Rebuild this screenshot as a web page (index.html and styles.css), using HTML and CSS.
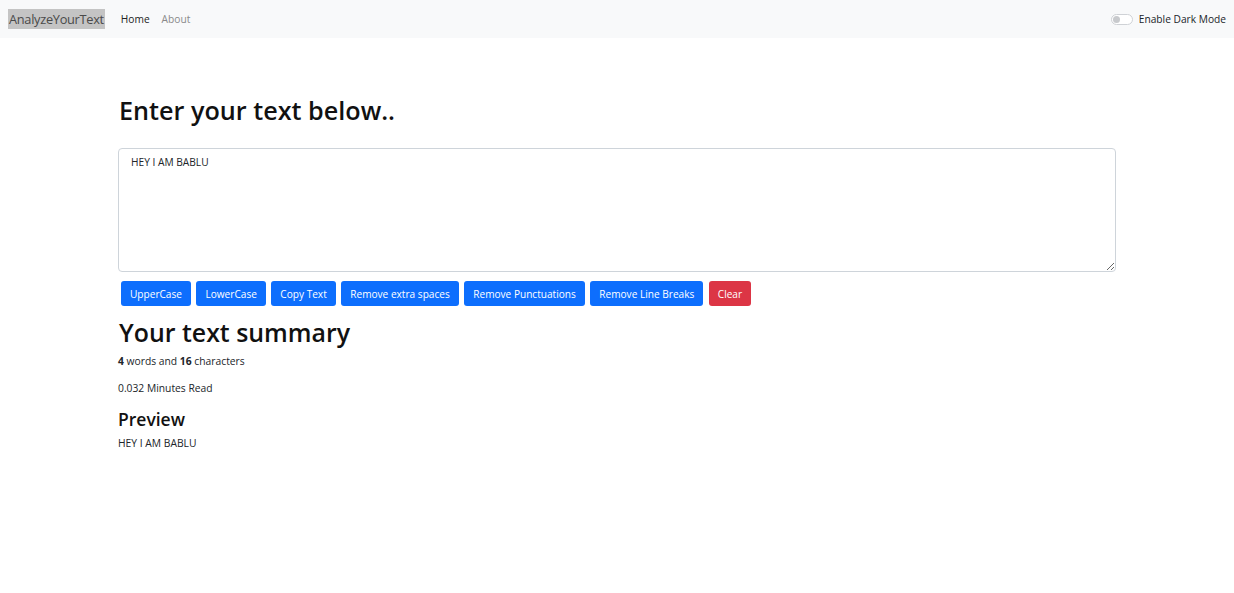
FILE: index.html
```html
<!DOCTYPE html>
<html lang="en">
<head>
<meta charset="utf-8">
<title>AnalyzeYourText</title>
<link rel="stylesheet" href="styles.css">
</head>
<body>
<nav class="navbar">
  <div class="nav-left">
    <a class="brand" href="#">AnalyzeYourText</a>
    <a class="nav-link active" href="#">Home</a>
    <a class="nav-link" href="#">About</a>
  </div>
  <label class="switch">
    <span class="toggle"><span class="knob"></span></span>
    <span class="switch-label">Enable Dark Mode</span>
  </label>
</nav>
<main class="container">
  <h1 class="title">Enter your text below..</h1>
  <textarea class="textbox">HEY I AM BABLU</textarea>
  <div class="actions">
    <button class="btn btn-primary">UpperCase</button>
    <button class="btn btn-primary">LowerCase</button>
    <button class="btn btn-primary">Copy Text</button>
    <button class="btn btn-primary">Remove extra spaces</button>
    <button class="btn btn-primary">Remove Punctuations</button>
    <button class="btn btn-primary">Remove Line Breaks</button>
    <button class="btn btn-danger">Clear</button>
  </div>
  <h1 class="summary-title">Your text summary</h1>
  <p class="line"><b>4</b> words and <b>16</b> characters</p>
  <p class="line last">0.032 Minutes Read</p>
  <h2 class="preview-title">Preview</h2>
  <p class="preview">HEY I AM BABLU</p>
</main>
</body>
</html>
```
FILE: styles.css
```css
* { box-sizing: border-box; }
body {
  margin: 0;
  font-family: "Open Sans", "Noto Sans", sans-serif;
  font-size: 10.3px;
  color: #212529;
  background: #fff;
}
.navbar {
  height: 38px;
  background: #f8f9fa;
  display: flex;
  align-items: center;
  justify-content: space-between;
  padding: 0 8px;
}
.nav-left {
  display: flex;
  align-items: center;
}
.brand {
  background: #c4c4c4;
  color: #4a4a4a;
  font-size: 12.8px;
  text-decoration: none;
  line-height: 20px;
  padding: 0 1px;
  margin-right: 16px;
  letter-spacing: -0.3px;
}
.nav-link {
  text-decoration: none;
  color: #8a8a8a;
  font-size: 10.2px;
  margin-right: 12px;
}
.nav-link.active { color: #222; }
.switch {
  display: flex;
  align-items: center;
  gap: 6px;
  font-size: 10.2px;
  color: #212529;
}
.toggle {
  width: 22px;
  height: 11px;
  border: 1px solid #cfd2d6;
  border-radius: 6px;
  background: #fff;
  display: flex;
  align-items: center;
  padding-left: 1px;
}
.knob {
  width: 7px;
  height: 7px;
  border-radius: 50%;
  background: #c8cacd;
}
.container {
  width: 998px;
  margin: 0 auto;
  padding-top: 55px;
}
.title {
  font-size: 25.2px;
  font-weight: 600;
  margin: 0 0 21px 1px;
  line-height: 34px;
  color: #111;
}
.textbox {
  display: block;
  width: 998px;
  height: 124px;
  border: 1px solid #ced4da;
  border-radius: 4px;
  padding: 6px 12px;
  font-family: inherit;
  font-size: 10.2px;
  color: #212529;
  resize: vertical;
}
.actions {
  display: flex;
  gap: 5.5px;
  margin: 9px 0 0 3px;
}
.btn {
  border: none;
  border-radius: 3px;
  color: #fff;
  font-family: inherit;
  font-size: 10.1px;
  height: 25px;
  padding: 0 9px;
}
.btn-primary { background: #0d6efd; }
.btn-danger { background: #dc3545; }
.summary-title {
  font-size: 24.9px;
  font-weight: 600;
  margin: 9px 0 6px 1px;
  line-height: 34px;
  color: #111;
}
.line {
  margin: 0 0 14px 0;
  line-height: 13px;
}
.line.last { margin-bottom: 12px; }
.preview-title {
  font-size: 17.5px;
  font-weight: 600;
  margin: 0 0 5px 0;
  line-height: 24px;
  color: #111;
}
.preview {
  margin: 0;
}
```
